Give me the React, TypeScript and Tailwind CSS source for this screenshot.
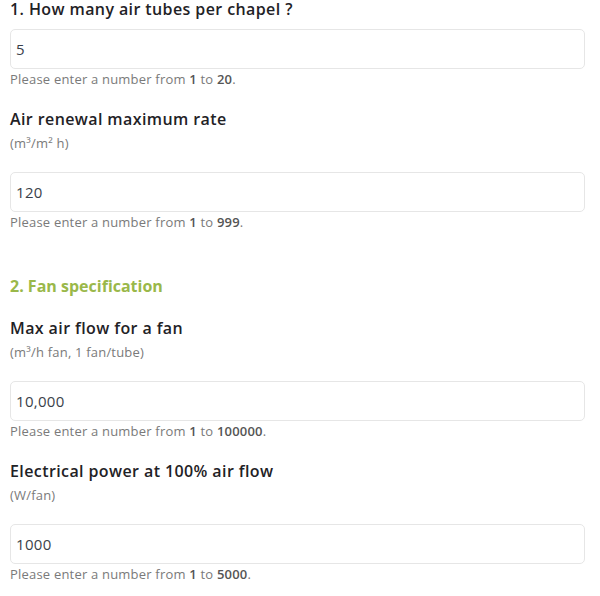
const label = "text-[16px] font-semibold leading-[18px] tracking-[0.4px] text-[#1f2226]";
const unit = "mt-[7px] text-[13px] leading-[16px] tracking-[0.2px] text-[#7a7a7a]";
const input =
  "flex h-[40px] items-center rounded-[5px] border border-[#e6e6e6] bg-white px-[5px] text-[15px] tracking-[0.3px] text-[#3a3f4a]";
const help = "mt-[2px] text-[13px] leading-[16px] tracking-[0.2px] text-[#7a7a7a]";

function Field({
  title,
  units,
  value,
  max,
  className,
}: {
  title: string;
  units?: string;
  value: string;
  max: string;
  className?: string;
}) {
  return (
    <div className={className}>
      <div className={label}>{title}</div>
      {units && <div className={unit}>{units}</div>}
      <div className={`${input} ${units ? "mt-[21px]" : "mt-[11px]"}`}>{value}</div>
      <div className={help}>
        Please enter a number from <b className="font-semibold text-[#555]">1</b> to{" "}
        <b className="font-semibold text-[#555]">{max}</b>.
      </div>
    </div>
  );
}

export default function App() {
  return (
    <div className="w-[600px] bg-white pl-[10px] pr-[15px] font-['Open_Sans',sans-serif]">
      <Field title="1. How many air tubes per chapel ?" value="5" max="20" />
      <Field className="mt-[23px]" title="Air renewal maximum rate" units="(m³/m² h)" value="120" max="999" />

      <h2 className="mt-[45px] text-[16px] font-bold leading-[22px] text-[#9ab84a]">
        2. Fan specification
      </h2>

      <Field className="mt-[22px]" title="Max air flow for a fan" units="(m³/h fan, 1 fan/tube)" value="10,000" max="100000" />
      <Field className="mt-[23px]" title="Electrical power at 100% air flow" units="(W/fan)" value="1000" max="5000" />
    </div>
  );
}
